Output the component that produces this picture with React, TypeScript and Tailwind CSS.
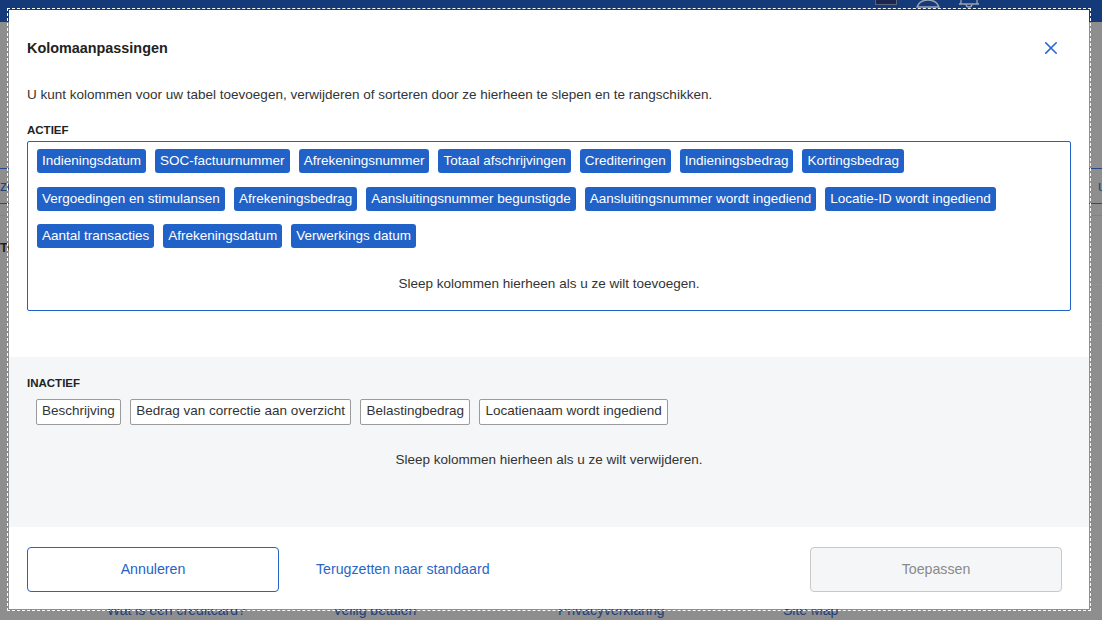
import React from "react";

const active = [
  "Indieningsdatum",
  "SOC-factuurnummer",
  "Afrekeningsnummer",
  "Totaal afschrijvingen",
  "Crediteringen",
  "Indieningsbedrag",
  "Kortingsbedrag",
  "Vergoedingen en stimulansen",
  "Afrekeningsbedrag",
  "Aansluitingsnummer begunstigde",
  "Aansluitingsnummer wordt ingediend",
  "Locatie-ID wordt ingediend",
  "Aantal transacties",
  "Afrekeningsdatum",
  "Verwerkings datum",
];

const inactive = [
  "Beschrijving",
  "Bedrag van correctie aan overzicht",
  "Belastingbedrag",
  "Locatienaam wordt ingediend",
];

export default function App() {
  return (
    <div className="relative h-[620px] w-[1102px] overflow-hidden bg-[#8e8e8e] font-['Liberation_Sans',Arial,Helvetica,sans-serif]">
      {/* page behind the overlay */}
      <div className="flex h-[620px] flex-col">
        <div className="flex h-[22px] shrink-0 items-start bg-[#143a79]">
          <div className="ml-[875px] h-[5px] w-[22px] border border-t-0 border-[#5a6478] bg-[#1b2550]" />
          <svg className="ml-[19px]" width="24" height="8" viewBox="0 0 24 8">
            <path d="M1 7 C3 1 8 0 12 0 C16 0 21 1 23 7 Z" fill="none" stroke="#9aa3b3" strokeWidth="1.3" />
          </svg>
          <svg className="ml-[18px]" width="22" height="9" viewBox="0 0 22 9">
            <path d="M3 0 L3 2 C3 4 1 4 1 4 L21 4 C21 4 19 4 19 2 L19 0" fill="none" stroke="#9aa3b3" strokeWidth="1.3" />
            <path d="M8 4 C8 8 14 8 14 4" fill="none" stroke="#9aa3b3" strokeWidth="1.3" />
          </svg>
        </div>
        <div className="h-[146px] shrink-0" />
        <div className="flex h-[36px] shrink-0 items-center justify-between border-y border-[#2a4a86] text-[14px] text-[#22407a]">
          <span>zoeken</span>
          <span className="w-[4px] overflow-hidden">u</span>
        </div>
        <div className="h-[12px] shrink-0 border-b border-[#848484]" />
        <div className="flex h-[69px] shrink-0 items-center border-b border-[#939393] text-[13px] font-bold text-[#1f1f1f]">
          <span className="-mt-[4px]">TOTAAL</span>
        </div>
        <div className="h-[39px] shrink-0 border-b border-[#939393]" />
        <div className="mt-auto flex pb-[1px] pl-[107px] text-[14px] leading-[17px] text-[#22407a]">
          <span className="w-[226px]">Wat is een creditcard?</span>
          <span className="w-[225px]">Veilig betalen</span>
          <span className="w-[225px]">Privacyverklaring</span>
          <span>Site Map</span>
        </div>
      </div>

      {/* modal */}
      <div className="absolute left-[9px] top-[10px] flex h-[599px] w-[1080px] flex-col bg-white outline outline-1 outline-offset-[1px] outline-dashed outline-white">
        <div className="px-[18px]">
          <div className="flex items-center justify-between pt-[28px]">
            <h2 className="text-[14.4px] font-bold leading-[20px] text-[#222]">Kolomaanpassingen</h2>
            <button className="mr-[14px] flex h-[12px] w-[12px] items-center justify-center" aria-label="Sluiten">
              <svg width="12" height="12" viewBox="0 0 12 12">
                <path d="M0.8 0.8 L11.2 11.2 M11.2 0.8 L0.8 11.2" stroke="#2a6bd0" strokeWidth="1.6" strokeLinecap="square" />
              </svg>
            </button>
          </div>
          <p className="mt-[28px] text-[13.5px] leading-[17px] text-[#333]">
            U kunt kolommen voor uw tabel toevoegen, verwijderen of sorteren door ze hierheen te slepen en te rangschikken.
          </p>
          <div className="mt-[20px] text-[11.5px] font-bold leading-[14px] text-[#222]">ACTIEF</div>
          <div className="mt-[4px] rounded-[2px] border border-[#2162c8] pb-[18.5px] pl-[9px] pr-[9px] pt-[7px]">
            <div className="flex flex-wrap gap-x-[9px] gap-y-[13.5px]">
              {active.map((c) => (
                <span
                  key={c}
                  className="flex h-[24px] items-center rounded-[3px] bg-[#2162c8] px-[5px] text-[13.5px] leading-[24px] whitespace-nowrap text-white"
                >
                  {c}
                </span>
              ))}
            </div>
            <div className="mt-[26.5px] text-center text-[13.5px] leading-[17px] text-[#333]">
              Sleep kolommen hierheen als u ze wilt toevoegen.
            </div>
          </div>
        </div>

        <div className="mt-[46px] h-[170px] bg-[#f5f6f8] px-[18px] pt-[18.5px]">
          <div className="text-[11.5px] font-bold leading-[14px] text-[#222]">INACTIEF</div>
          <div className="mt-[9px] flex flex-wrap gap-x-[9.5px] gap-y-[10px] pl-[9px]">
            {inactive.map((c) => (
              <span
                key={c}
                className="flex h-[26px] items-center rounded-[2px] border border-[#9b9b9b] bg-white px-[5px] text-[13.5px] whitespace-nowrap text-[#333]"
              >
                {c}
              </span>
            ))}
          </div>
          <div className="mt-[26.5px] text-center text-[13.5px] leading-[17px] text-[#333]">
            Sleep kolommen hierheen als u ze wilt verwijderen.
          </div>
        </div>

        <div className="flex h-[82px] items-start pl-[18px] pr-[27px] pt-[20px]">
          <button className="flex h-[45px] w-[252px] items-center justify-center rounded-[4px] border border-[#2463c7] bg-white text-[14.2px] text-[#2463c7]">
            Annuleren
          </button>
          <button className="ml-[37px] flex h-[45px] items-center text-[14.2px] text-[#2a66c8]">Terugzetten naar standaard</button>
          <button className="ml-auto flex h-[45px] w-[252px] items-center justify-center rounded-[4px] border border-[#c9c9c9] bg-[#f5f6f8] text-[14.2px] text-[#8a8a8a]">
            Toepassen
          </button>
        </div>
      </div>
    </div>
  );
}
